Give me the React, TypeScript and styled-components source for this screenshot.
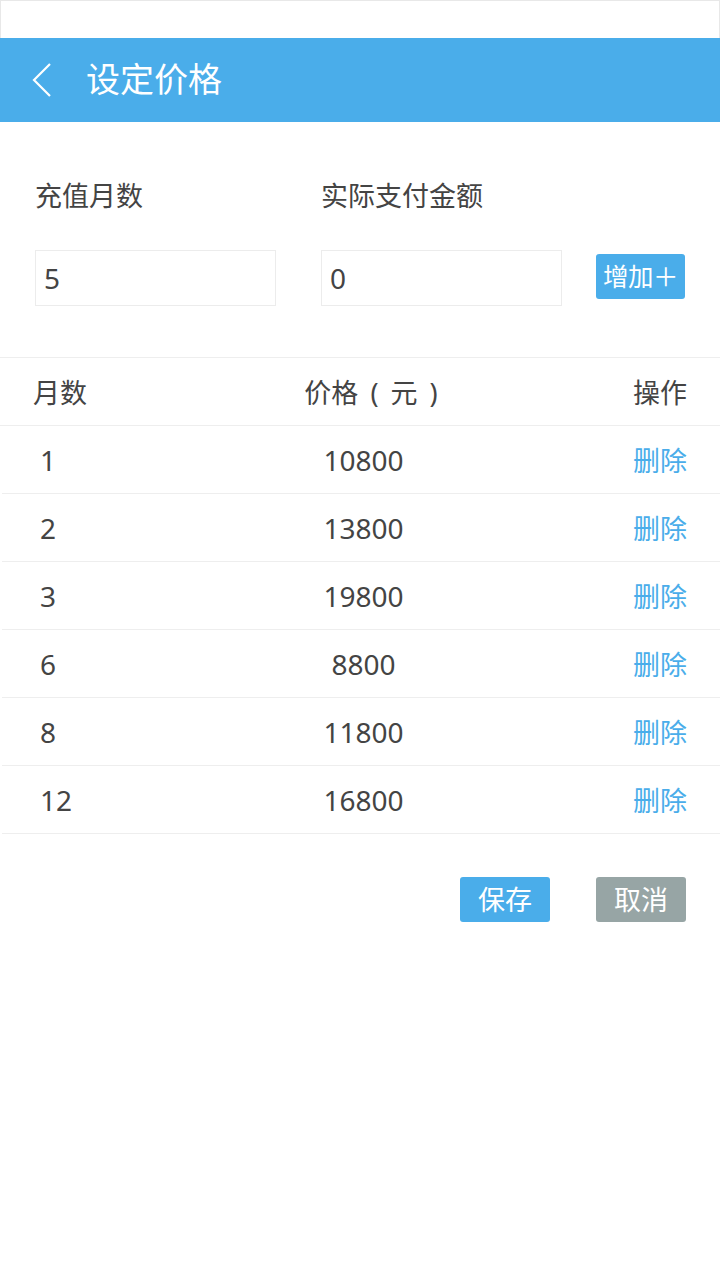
import React from 'react'
import styled, { createGlobalStyle } from 'styled-components'

const GlobalStyle = createGlobalStyle`
  html, body {
    margin: 0;
    padding: 0;
    background: #fff;
  }
  body {
    font-family: "Noto Sans", "Noto Sans CJK SC", sans-serif;
    color: #444;
  }
`

const BLUE = '#4aadea'

const Page = styled.div`
  width: 720px;
  min-height: 1280px;
  background: #fff;
`

const StatusBar = styled.div`
  height: 37px;
  border: 1px solid #e8e8e8;
  border-bottom: none;
  box-sizing: content-box;
`

const Header = styled.header`
  height: 84px;
  background: ${BLUE};
  display: flex;
  align-items: center;
  padding-left: 31px;
`

const Back = styled.button`
  width: 24px;
  height: 36px;
  padding: 0;
  border: none;
  background: none;
  display: flex;
  align-items: center;
  margin-right: 31px;
`

const Title = styled.h1`
  margin: 0;
  font-size: 34px;
  font-weight: normal;
  color: #fff;
  line-height: 1;
  padding-bottom: 2px;
`

const Form = styled.div`
  padding: 54px 35px 0 35px;
`

const Labels = styled.div`
  display: grid;
  grid-template-columns: 241px 241px;
  column-gap: 45px;
`

const Label = styled.div`
  font-size: 27px;
  line-height: 40px;
`

const Inputs = styled.div`
  display: flex;
  align-items: center;
  margin-top: 34px;
`

const Field = styled.input`
  width: 241px;
  height: 56px;
  box-sizing: border-box;
  border: 1px solid #ececec;
  padding: 0 8px;
  font-family: inherit;
  font-size: 28px;
  color: #444;
  outline: none;
  margin-right: 45px;
`

const Button = styled.button<{ $tone?: 'blue' | 'gray' }>`
  width: 90px;
  height: 45px;
  padding: 0;
  border: none;
  border-radius: 3px;
  background: ${p => (p.$tone === 'gray' ? '#97a5a5' : BLUE)};
  color: #fff;
  font-family: inherit;
  font-size: 27px;
  line-height: 45px;
  white-space: nowrap;
`

const AddButton = styled(Button)`
  margin-left: -11px;
  margin-bottom: 3px;
  font-size: 25.5px;
  letter-spacing: -0.5px;
`

const Table = styled.div`
  margin-top: 51px;
  border-top: 1px solid #eeeeee;
`

const Row = styled.div<{ $head?: boolean }>`
  display: grid;
  grid-template-columns: 1fr 1fr 1fr;
  align-items: center;
  height: 67px;
  padding: 0 33px 0 ${p => (p.$head ? 33 : 38)}px;
  margin-left: ${p => (p.$head ? 0 : 2)}px;
  border-bottom: 1px solid #eeeeee;
  font-size: 27px;
  color: #444;
`

const Cell = styled.div<{ $align: 'left' | 'center' | 'right'; $link?: boolean }>`
  text-align: ${p => p.$align};
  color: ${p => (p.$link ? BLUE : 'inherit')};
  font-size: ${p => (p.$link ? 27 : 28)}px;
  white-space: nowrap;
`

const HeadCell = styled(Cell)<{ $shift?: number }>`
  font-size: 27px;
  padding-left: ${p => p.$shift ?? 0}px;
  word-spacing: 5px;
`

const Footer = styled.div`
  display: flex;
  justify-content: flex-end;
  gap: 46px;
  padding: 43px 34px 0 0;
`

const prices = [
  { months: 1, price: 10800 },
  { months: 2, price: 13800 },
  { months: 3, price: 19800 },
  { months: 6, price: 8800 },
  { months: 8, price: 11800 },
  { months: 12, price: 16800 },
]

const App = () => {
  return (
    <Page>
      <GlobalStyle />
      <StatusBar />
      <Header>
        <Back aria-label="返回">
          <svg width="22" height="36" viewBox="0 0 22 36">
            <path d="M19 2 L3 18 L19 34" fill="none" stroke="#fff" strokeWidth="2.2" />
          </svg>
        </Back>
        <Title>设定价格</Title>
      </Header>

      <Form>
        <Labels>
          <Label>充值月数</Label>
          <Label>实际支付金额</Label>
        </Labels>
        <Inputs>
          <Field defaultValue="5" />
          <Field defaultValue="0" />
          <AddButton>增加＋</AddButton>
        </Inputs>
      </Form>

      <Table>
        <Row $head>
          <HeadCell $align="left">月数</HeadCell>
          <HeadCell $align="center" $shift={22}>价格 ( 元 )</HeadCell>
          <HeadCell $align="right">操作</HeadCell>
        </Row>
        {prices.map(p => (
          <Row key={p.months}>
            <Cell $align="left">{p.months}</Cell>
            <Cell $align="center">{p.price}</Cell>
            <Cell $align="right" $link>删除</Cell>
          </Row>
        ))}
      </Table>

      <Footer>
        <Button>保存</Button>
        <Button $tone="gray">取消</Button>
      </Footer>
    </Page>
  )
}

export default App
